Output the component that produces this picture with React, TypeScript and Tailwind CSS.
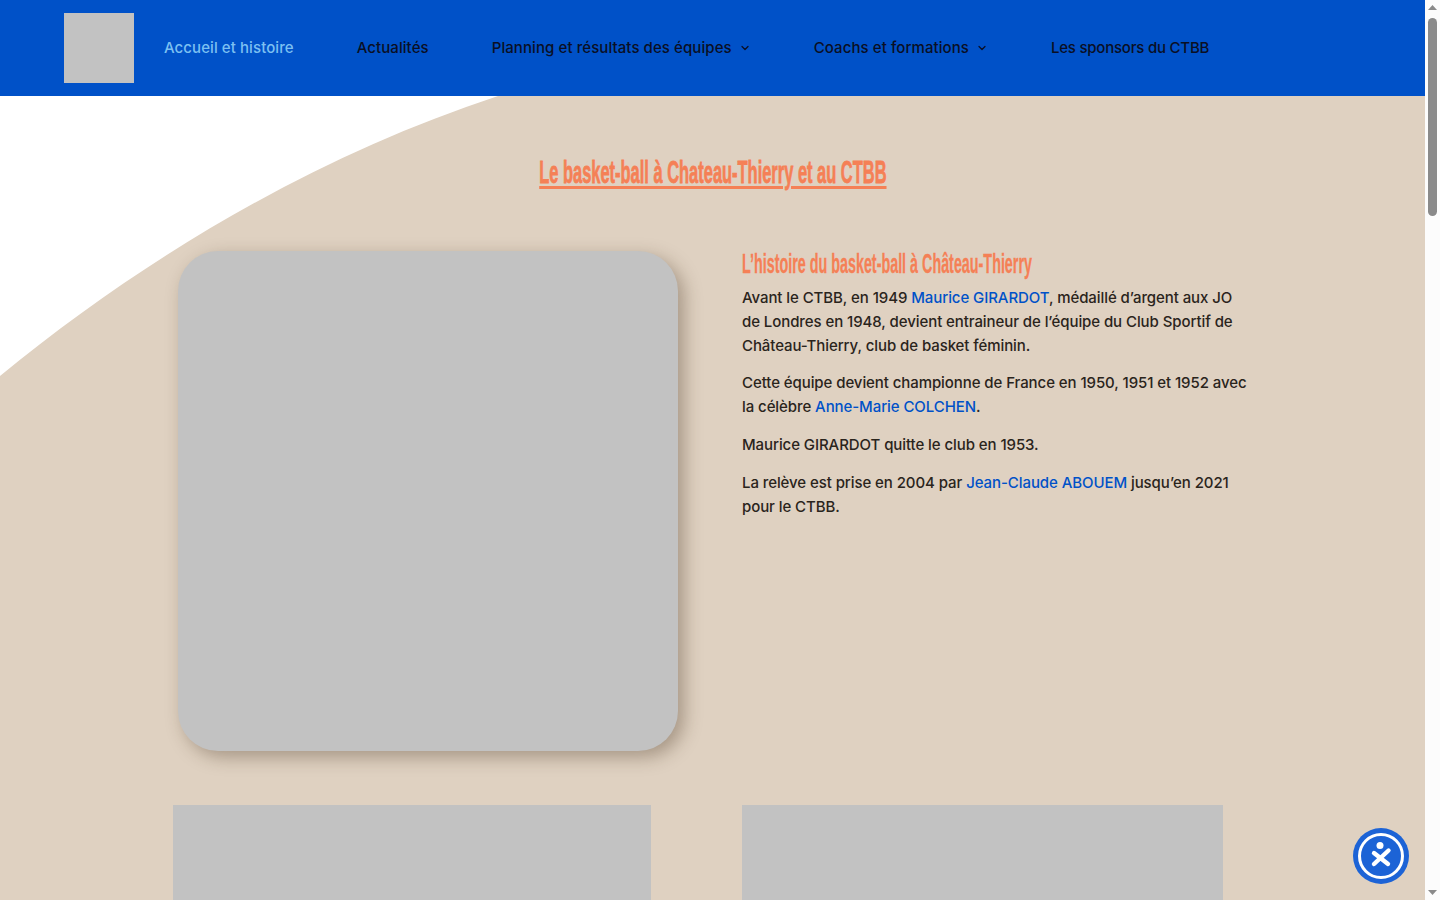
import { ChevronDown } from "lucide-react";

const nav = [
  { label: "Accueil et histoire", className: "text-[#7cc0f2]" },
  { label: "Actualités" },
  { label: "Planning et résultats des équipes", caret: true },
  { label: "Coachs et formations", caret: true },
  { label: "Les sponsors du CTBB", className: "tracking-[-0.22px]" },
];

function A({ children }: { children: string }) {
  return <a className="text-[#0051c8]">{children}</a>;
}

export default function App() {
  return (
    <div className="relative pr-[15px] font-['Inter','Open_Sans',sans-serif] text-[15px] font-medium leading-6 tracking-[-0.08px] text-[#2a241c]">
      {/* Header */}
      <header className="flex h-24 items-center bg-[#0051c8] pl-16">
        <div className="h-[70px] w-[70px] bg-[#c2c2c2]" />
        <nav className="ml-[30px] flex items-center gap-[63px] text-[15px] tracking-[0.08px] text-[#0a0f24]">
          {nav.map((item) => (
            <a key={item.label} className={`flex items-center gap-[7px] ${item.className ?? ""}`}>
              {item.label}
              {item.caret && <ChevronDown size={12} strokeWidth={2.5} />}
            </a>
          ))}
        </nav>
      </header>

      {/* Main */}
      <main className="relative overflow-hidden bg-[#dfd1c1] pb-20">
        <svg className="absolute left-0 top-0" width="500" height="282" viewBox="0 0 500 282">
          <path d="M0 0H498C310 62 140 165 0 280Z" fill="#ffffff" />
        </svg>

        <div className="relative">
          <h1 className="pt-[56px] text-center font-['Liberation_Sans',sans-serif] text-[32px] font-bold leading-10 tracking-normal text-[#f58056]">
            <span className="inline-block scale-x-[0.514] underline decoration-[3px] underline-offset-[3px] [-webkit-text-stroke:0.8px_#f58056]">
              Le basket-ball à Chateau-Thierry et au CTBB
            </span>
          </h1>

          <div className="mt-[59px] grid grid-cols-[500px_508px] gap-[64px] pl-[178px]">
            <div className="h-[500px] rounded-[40px] bg-[#c2c2c2] shadow-[6px_6px_18px_0_rgba(60,40,20,0.35)]" />
            <div>
              <h2 className="mt-[-5px] origin-left scale-x-[0.512] whitespace-nowrap font-['Liberation_Sans',sans-serif] text-[28px] font-bold leading-9 tracking-normal text-[#f58056] [-webkit-text-stroke:0.3px_#f58056]">
                L’histoire du basket-ball à Château-Thierry
              </h2>
              <p className="mt-[4px]">
                Avant le CTBB, en 1949 <A>Maurice GIRARDOT</A>, médaillé d’argent aux JO de Londres en 1948, devient entraineur de l’équipe du Club Sportif de Château-Thierry, club de basket féminin.
              </p>
              <p className="mt-[13px]">
                Cette équipe devient championne de France en 1950, 1951 et 1952 avec la célèbre <A>Anne-Marie COLCHEN</A>.
              </p>
              <p className="mt-[14px]">Maurice GIRARDOT quitte le club en 1953.</p>
              <p className="mt-[14px]">
                La relève est prise en 2004 par <A>Jean-Claude ABOUEM</A> jusqu’en 2021 pour le CTBB.
              </p>
            </div>
          </div>

          <div className="mt-[54px] flex pl-[173px]">
            <div className="h-[300px] w-[478px] bg-[#c2c2c2]" />
            <div className="ml-[91px] h-[300px] w-[481px] bg-[#c2c2c2]" />
          </div>
        </div>
      </main>

      {/* Accessibility button */}
      <button className="fixed bottom-[16px] right-[31px] flex h-14 w-14 items-center justify-center rounded-full bg-[#1c63d6]">
        <span className="flex h-[46px] w-[46px] items-center justify-center rounded-full border-[3px] border-white">
          <svg width="28" height="30" viewBox="0 0 28 30" fill="none">
            <circle cx="13" cy="4.5" r="3.5" fill="#fff" />
            <path d="M7 12L21 23M21.5 9.5L7 23" stroke="#fff" strokeWidth="4.4" strokeLinecap="round" />
          </svg>
        </span>
      </button>

      {/* Scrollbar */}
      <div className="fixed right-0 top-0 flex h-screen w-[15px] flex-col items-center bg-[#fcfcfc]">
        <svg className="mt-[5px]" width="9" height="5" viewBox="0 0 9 5">
          <path d="M4.5 0L9 5H0Z" fill="#8a8a8a" />
        </svg>
        <div className="mt-2 h-[198px] w-[9px] rounded-full bg-[#8a8a8a]" />
        <svg className="mb-[5px] mt-auto" width="9" height="5" viewBox="0 0 9 5">
          <path d="M4.5 5L9 0H0Z" fill="#8a8a8a" />
        </svg>
      </div>
    </div>
  );
}
